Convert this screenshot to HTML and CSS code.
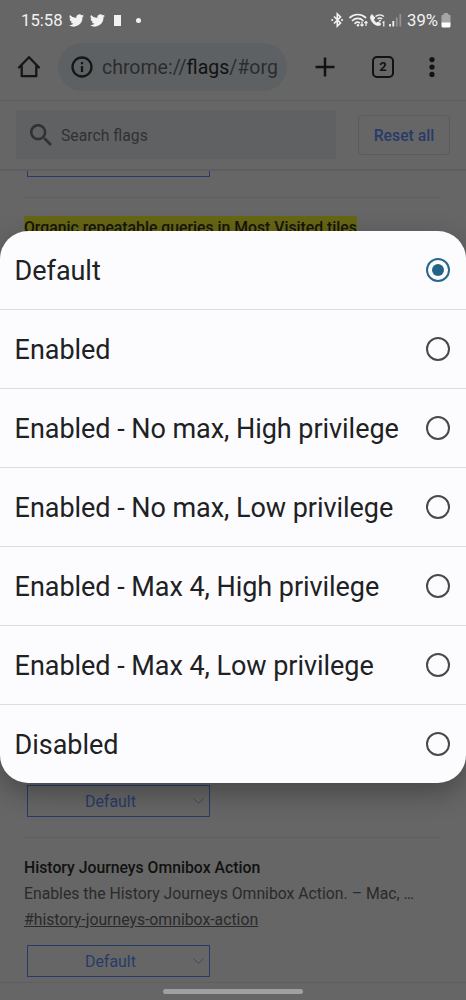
FILE: index.html
```
<!DOCTYPE html>
<html lang="en">
<head>
<meta charset="utf-8">
<title>Flags</title>
<link rel="stylesheet" href="styles.css">
</head>
<body>
<div class="screen">
  <header class="status">
    <span class="clock">15:58</span>
    <svg class="bird" viewBox="1 3 22 18"><path d="M23 5.1a9 9 0 0 1-2.6.7 4.500 4.500 0 0 0 2-2.500 9 9 0 0 1-2.900 1.100A4.500 4.500 0 0 0 11.800 8.500 12.900 12.900 0 0 1 2.500 3.800a4.500 4.500 0 0 0 1.400 6 4.500 4.500 0 0 1-2-.6 4.500 4.500 0 0 0 3.600 4.500 4.500 4.500 0 0 1-2 .1 4.500 4.500 0 0 0 4.200 3.100A9 9 0 0 1 1 18.800 12.800 12.800 0 0 0 20.700 7.400 9 9 0 0 0 23 5.100z"/></svg>
    <svg class="bird" viewBox="1 3 22 18"><path d="M23 5.1a9 9 0 0 1-2.600.7 4.500 4.500 0 0 0 2-2.500 9 9 0 0 1-2.900 1.100A4.500 4.500 0 0 0 11.800 8.500 12.900 12.900 0 0 1 2.500 3.800a4.500 4.500 0 0 0 1.400 6 4.500 4.500 0 0 1-2-.6 4.500 4.500 0 0 0 3.600 4.500 4.500 4.500 0 0 1-2 .1 4.500 4.500 0 0 0 4.200 3.100A9 9 0 0 1 1 18.800 12.800 12.800 0 0 0 20.700 7.400 9 9 0 0 0 23 5.100z"/></svg>
    <span class="note"></span>
    <span class="more-dot"></span>
    <svg class="signals" width="72" height="16" viewBox="0 0 72 16" fill="none" stroke="#f2f2f2" stroke-width="1.700">
      <path d="M3 4.500 9.500 11 6.300 14V2l3.200 3L3 11.500"/>
      <path d="M1.200 8h.1M11 8h.1" stroke-width="2" stroke-linecap="round"/>
      <path d="M19 5.500a11.500 11.500 0 0 1 15.500 0M21.500 8.500a7.500 7.500 0 0 1 10.500 0M24 11.300a4 4 0 0 1 4.500-.6" stroke-linecap="round"/>
      <circle cx="27" cy="13.300" r="1.200" fill="#f2f2f2" stroke="none"/>
      <path d="M31 9.500v4.500M29.500 12.500 31 14l1.500-1.500M35 14V9.500M33.500 11 35 9.500l1.500 1.500" stroke-width="1.200"/>
      <path d="M41 2.500c-2 1.500-1.800 5 1 8.200 2.600 2.800 6.200 3.600 8 1.600l-2.400-2.200-2 .8c-1.500-.8-2.600-2-3-3.500l1.300-1.500z" fill="#f2f2f2" stroke-width="1"/>
      <path d="M44.500 4.500a6.500 6.500 0 0 1 8.500 0M46.500 7a4 4 0 0 1 4.800 0" stroke-width="1.500"/>
      <circle cx="49" cy="8.700" r="1" fill="#f2f2f2" stroke="none"/>
      <path d="M51.500 10.700l1.300-.9v4.600" stroke-width="1.200"/>
      <path d="M59 12v2.500" stroke-width="1.800"/><path d="M62.300 9v5.500" stroke-width="1.800"/><path d="M65.800 5.500v9M69.300 2v12.500" stroke="#929292" stroke-width="1.800"/>
    </svg>
    <span class="percent">39%</span>
    <svg class="battery" width="10" height="15" viewBox="0 0 10 15"><path fill="#a5a5a5" d="M3 0h4v1.500h1A1.500 1.500 0 0 1 9.500 3v7H.5V3A1.500 1.500 0 0 1 2 1.500h1z"/><path fill="#fff" d="M.5 9.500h9V13A1.500 1.500 0 0 1 8 14.500H2A1.500 1.500 0 0 1 .5 13z"/></svg>
  </header>
  <nav class="toolbar">
    <svg class="home" width="24" height="24" viewBox="0 0 24 24" fill="none" stroke="#161616" stroke-width="2.300" stroke-linecap="round" stroke-linejoin="round"><path d="M2 12.500 12 2.200 22 12.500M4.700 11v10.200h14.600V11"/></svg>
    <div class="address">
      <svg width="22" height="22" viewBox="0 0 22 22" fill="none" stroke="#161616" stroke-width="2.300"><circle cx="11" cy="11" r="9.500"/><path d="M11 10v6M11 6v2.200"/></svg>
      <span class="url">chrome://<b>flags</b>/#org</span>
    </div>
    <svg class="plus" width="20" height="20" viewBox="0 0 20 20" stroke="#121212" stroke-width="2.500"><path d="M10 .5v19M.5 10h19"/></svg>
    <span class="tabs">2</span>
    <svg class="dots" width="6" height="20" viewBox="0 0 6 20" fill="#121212"><circle cx="3" cy="2.600" r="2.600"/><circle cx="3" cy="10" r="2.600"/><circle cx="3" cy="17.400" r="2.600"/></svg>
  </nav>
  <div class="search-row">
    <div class="search">
      <svg width="22" height="22" viewBox="3 3 17.500 17.500" fill="#303133"><path d="M15.500 14h-.8l-.3-.3A6.500 6.500 0 1 0 13.700 14.400l.3.300v.8l5 5 1.500-1.500zm-6 0a4.500 4.500 0 1 1 0-9 4.500 4.500 0 0 1 0 9z"/></svg>
      <span>Search flags</span>
    </div>
    <span class="reset">Reset all</span>
  </div>
  <main class="flags">
    <section class="flag flag-first"><div class="select"></div></section>
    <section class="flag flag-match">
      <h2><mark>Organic repeatable queries in Most Visited tiles</mark></h2>
      <div class="select"><span>Default</span><svg width="11" height="7" viewBox="0 0 11 7"><path d="M.8.8 5.500 5.500 10.200.8"/></svg></div>
    </section>
    <section class="flag">
      <h2>History Journeys Omnibox Action</h2>
      <p class="desc">Enables the History Journeys Omnibox Action. – Mac, …</p>
      <p class="link">#history-journeys-omnibox-action</p>
      <div class="select"><span>Default</span><svg width="11" height="7" viewBox="0 0 11 7"><path d="M.8.8 5.500 5.500 10.200.8"/></svg></div>
    </section>
  </main>
  <footer class="gesture"><span></span></footer>
  <div class="dialog">
    <div class="option"><span>Default</span><i class="radio checked"></i></div>
    <div class="option"><span>Enabled</span><i class="radio"></i></div>
    <div class="option"><span>Enabled - No max, High privilege</span><i class="radio"></i></div>
    <div class="option"><span>Enabled - No max, Low privilege</span><i class="radio"></i></div>
    <div class="option"><span>Enabled - Max 4, High privilege</span><i class="radio"></i></div>
    <div class="option"><span>Enabled - Max 4, Low privilege</span><i class="radio"></i></div>
    <div class="option"><span>Disabled</span><i class="radio"></i></div>
  </div>
</div>
</body>
</html>
```
FILE: styles.css
```
* { box-sizing: border-box; }
body { margin: 0; font-family: Roboto, sans-serif; background: #666; }
h2, p { margin: 0; white-space: nowrap; }
.screen { position: relative; width: 466px; height: 1000px; overflow: hidden; display: flex; flex-direction: column; background: #666; }

.status { height: 40px; padding: 0 15px 0 21px; display: flex; align-items: center; color: #f2f2f2; font-size: 17px; }
.clock { width: 48px; white-space: nowrap; font-size: 16.700px; }
.bird { width: 15px; height: 13px; margin-right: 5.500px; fill: #f2f2f2; }
.note { width: 7px; height: 11px; margin-left: 4px; background: #f2f2f2; }
.more-dot { width: 5px; height: 5px; margin-left: 15px; border-radius: 50%; background: #f2f2f2; }
.signals { margin-left: auto; }
.percent { width: 32px; margin-left: 4px; white-space: nowrap; font-size: 16.700px; }
.battery { margin-left: 2px; }

.toolbar { height: 61px; padding: 2px 31px 9px 17px; display: flex; align-items: center; border-bottom: 1px solid #5b5b5b; }
.address { width: 229px; height: 48px; margin-left: 17px; padding-left: 13px; display: flex; align-items: center; gap: 9px; border-radius: 24px; background: #5e6163; }
.url { font-size: 19.500px; color: #2b2c2d; white-space: nowrap; padding-top: 1px; }
.url b { font-weight: 400; color: #111; }
.plus { margin-left: 28px; }
.tabs { width: 22px; height: 22px; margin-left: 37px; border: 2px solid #121212; border-radius: 5px; font-size: 13px; font-weight: 700; line-height: 18px; text-align: center; color: #121212; }
.dots { margin-left: 35px; }

.search-row { height: 70px; flex: none; padding: 9px 16px 10px; display: flex; align-items: center; justify-content: space-between; border-bottom: 2px solid #5e5e5e; }
.search { width: 320px; height: 49px; padding-left: 14px; display: flex; align-items: center; gap: 9px; background: #606163; color: #303133; font-size: 15.750px; }
.search span { padding-top: 1px; }
.reset { width: 92px; height: 40px; padding-top: 1px; border: 1px solid #5a5b5d; border-radius: 4px; display: grid; place-items: center; font-size: 15.750px; font-weight: 500; color: #263c68; }

.flags { height: 811px; padding: 0 25px 0 24px; overflow: hidden; }
.flag { border-bottom: 1px solid #5f5f5f; }
.flag:last-child { border: 0; padding-top: 17px; }
.flag-first { height: 27px; }
.flag-first .select { height: 6px; border-top: 0; }
.flag-match { height: 640px; padding: 17px 0 20px; display: flex; flex-direction: column; justify-content: space-between; }
.flag h2 { font-size: 15.770px; font-weight: 500; line-height: 26px; color: #111; }
mark { padding: 2px 0; background: #666614; color: #15150a; }
.desc, .link { font-size: 15.770px; line-height: 26px; color: #292a2b; }
.link { text-decoration: underline; }
.select { width: 183px; height: 32px; margin-left: 3px; padding: 0 5px 0 57px; display: flex; align-items: center; justify-content: space-between; border: 1px solid #263c68; color: #263c68; font-size: 15.900px; }
.select svg { fill: none; stroke: #3b4a66; stroke-width: 1; }
.link + .select { margin-top: 12px; }
.gesture { height: 18px; padding-top: 6px; border-top: 1px solid #5e5e5e; }
.gesture span { display: block; width: 140px; height: 5px; margin: 0 auto; border-radius: 3px; background: #a0a0a0; }

.dialog { position: absolute; left: 0; top: 231px; width: 466px; height: 552px; border-radius: 28px; background: #fcfcff; box-shadow: 0 10px 28px rgba(0,0,0,.3); overflow: hidden; }
.option { height: 79px; padding: 0 16px 0 14.600px; display: flex; align-items: center; justify-content: space-between; border-bottom: 1px solid #dcdde0; font-size: 27px; letter-spacing: -.045px; color: #202123; white-space: nowrap; }
.option span { padding-top: 2px; }
.option:last-child { height: 78px; border: 0; }
.radio { width: 24px; height: 24px; border: 2.500px solid #46494d; border-radius: 50%; display: grid; place-items: center; }
.checked { border-color: #2a678b; }
.checked::after { content: ""; width: 12px; height: 12px; border-radius: 50%; background: #23638a; }
```
